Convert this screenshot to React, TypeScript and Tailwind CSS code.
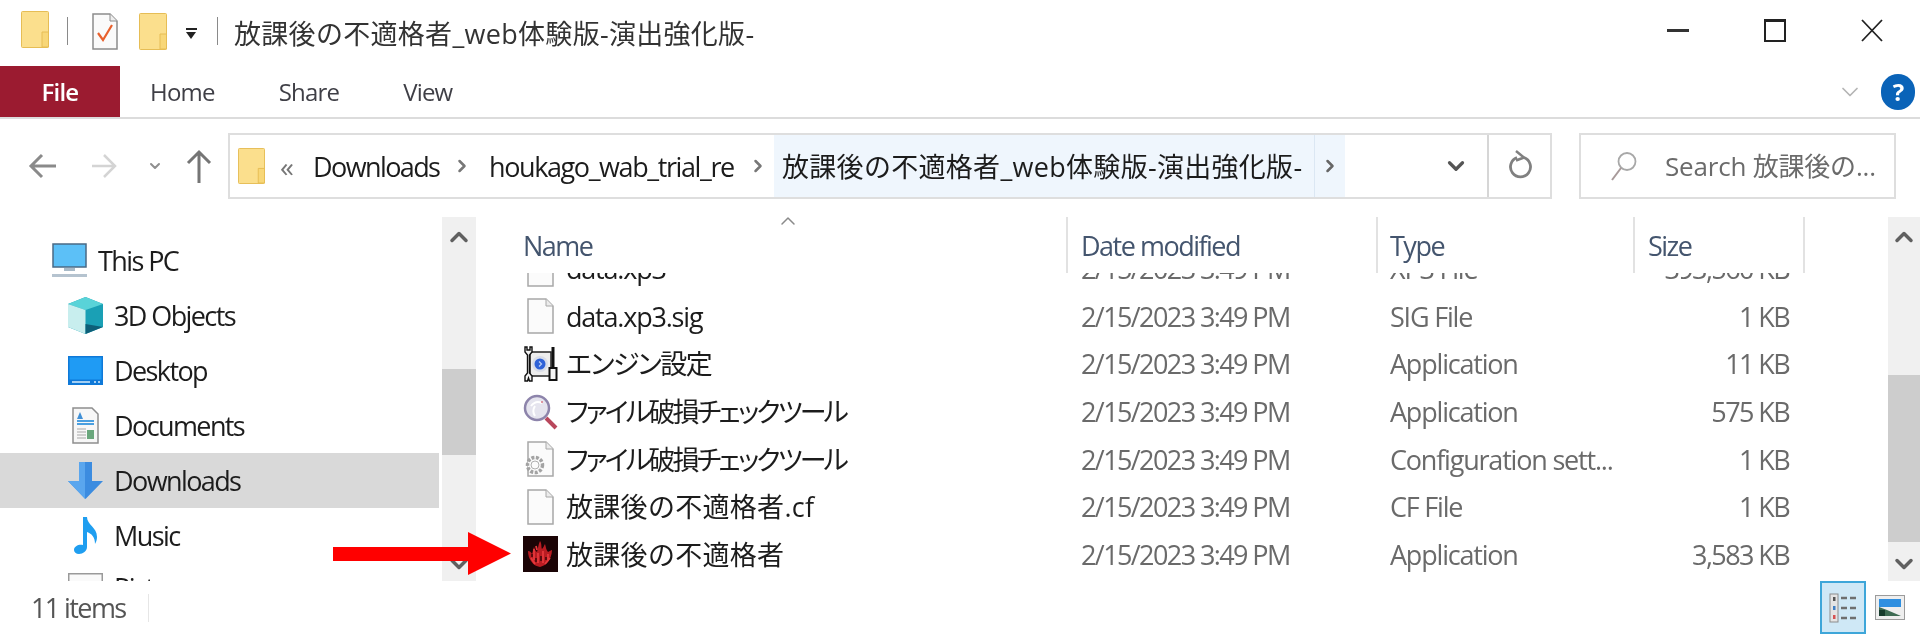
import type { ReactNode } from 'react';
import { ChevronDown, ChevronRight, ChevronUp } from 'lucide-react';

const font = "font-['Open_Sans','Noto_Sans_CJK_JP',sans-serif]";

function FolderIcon({ className }: { className: string }) {
  return (
    <svg viewBox="0 0 28 37" preserveAspectRatio="none" className={className}>
      <rect x="0.5" y="0.5" width="27" height="36" rx="1" fill="#fbdf8d" stroke="#e6bd55" />
      <path d="M21 36V21h6.500v15z" fill="#f8d778" stroke="#e6bd55" />
    </svg>
  );
}

function CheckFileIcon() {
  return (
    <svg viewBox="0 0 26 37" preserveAspectRatio="none" className="h-[37px] w-[26px]">
      <path d="M1 1h17l7 7v28H1z" fill="#fafafa" stroke="#8c8c8c" strokeWidth="1.5" />
      <path d="M18 1v7h7" fill="#eee" stroke="#8c8c8c" />
      <path d="M6 20l5 7 9-15" fill="none" stroke="#e8602c" strokeWidth="2.2" />
    </svg>
  );
}

function PlainFile({ children }: { children?: ReactNode }) {
  return (
    <svg viewBox="0 0 35 36" className="h-[36px] w-[35px] shrink-0">
      <path d="M5 1h18l7 7v27H5z" fill="#fbfbfb" stroke="#a8a8a8" strokeWidth="1.5" />
      <path d="M23 1v7h7" fill="#ececec" stroke="#a8a8a8" />
      {children}
    </svg>
  );
}

function EngineIcon() {
  return (
    <svg viewBox="0 0 35 36" className="h-[36px] w-[35px] shrink-0">
      <rect x="7" y="6" width="21" height="24" fill="#eeeeee" stroke="#222" strokeWidth="1.5" />
      <circle cx="17" cy="18" r="8" fill="#d9dde8" />
      <circle cx="17" cy="18" r="5.500" fill="#2f62d8" />
      <path d="M16 15.500l2.500 2.500-2.500 2.500" fill="none" stroke="#b9cdf5" strokeWidth="1.3" />
      <path d="M2 1v5l2.500 3v18L2 30v5h2.500l1-3 1 3H9v-5l-2.500-3V9L9 6V1H7v3H4V1z" fill="#f4f4f4" stroke="#111" strokeWidth="1.4" />
      <path d="M30 1v20" stroke="#111" strokeWidth="3" />
      <rect x="26.500" y="22" width="7" height="12" fill="#f4f4f4" stroke="#111" strokeWidth="2" />
    </svg>
  );
}

function MagnifierIcon() {
  return (
    <svg viewBox="0 0 35 36" className="h-[36px] w-[35px] shrink-0">
      <path d="M23 24l10 10" stroke="#b9475c" strokeWidth="4" />
      <circle cx="14" cy="14" r="12" fill="#e5e4ee" stroke="#8d84ab" strokeWidth="2.500" />
      <path d="M8 12c3-4 7-5 11-3M12 22c-2-3-2-7 0-10" fill="none" stroke="#ffffff" strokeWidth="2" />
      <circle cx="19" cy="8" r="1" fill="#d77a86" />
    </svg>
  );
}

function GearFileIcon() {
  return (
    <PlainFile>
      <circle cx="12" cy="24" r="7.500" fill="#fbfbfb" stroke="#a3a3a3" strokeWidth="3.500" strokeDasharray="3 1.500" />
      <circle cx="12" cy="24" r="4" fill="#fbfbfb" stroke="#b0b0b0" />
    </PlainFile>
  );
}

function GameIcon() {
  return (
    <svg viewBox="0 0 35 36" className="h-[36px] w-[35px] shrink-0">
      <rect width="35" height="36" fill="#1b0406" />
      <path d="M17 5c2 3 1 6 2 8 2-2 2-4 3-5 1 3 1 6 3 8 2-1 3-2 4-2 0 5-2 9-4 12-2 2-4 4-8 5-5-1-7-3-9-6-2-3-3-6-3-10 2 0 3 1 4 3 1-3 1-5 2-7 1 2 1 4 3 5 1-3 1-7 3-11z" fill="#b91c22" />
      <path d="M11 13v11M15 17v10M20 15v12M25 18v7M8 22l4 6M27 22l-5 6M13 10l1 4" stroke="#e5383b" strokeWidth="1.800" fill="none" />
      <path d="M13 22v4M18 20v5M23 21v3M9 18v3" stroke="#3d0508" strokeWidth="1.500" fill="none" />
    </svg>
  );
}

function PcIcon() {
  return (
    <svg viewBox="0 0 35 35" className="h-[35px] w-[35px]">
      <rect x="1" y="1" width="33" height="23" fill="#5cc0f7" stroke="#4a6a85" strokeWidth="1.500" />
      <rect x="12" y="25" width="11" height="3" fill="#a8bac8" />
      <rect x="0" y="31" width="35" height="3" fill="#b5c3cf" />
    </svg>
  );
}

function CubeIcon() {
  return (
    <svg viewBox="0 0 35 37" className="h-[37px] w-[35px]">
      <path d="M17.500 0L35 7v23l-17.500 7L0 30V7z" fill="#1aa0b5" />
      <path d="M17.500 0L35 7l-17.500 6L0 7z" fill="#59d3d8" />
      <path d="M0 7l17.500 6v24L0 30z" fill="#c8eeee" />
      <path d="M17.500 27L35 30l-17.500 7z" fill="#0d5f78" />
    </svg>
  );
}

function DesktopIcon() {
  return (
    <svg viewBox="0 0 35 29" className="h-[29px] w-[35px]">
      <rect width="35" height="29" fill="#0f79d8" />
      <rect x="1.500" y="1.500" width="32" height="22" fill="#1f9bf4" />
      <path d="M4 26h18M26 26h2M30 26h2" stroke="#d5ecfb" strokeWidth="1.500" />
    </svg>
  );
}

function DocumentsIcon() {
  return (
    <svg viewBox="0 0 27 37" className="h-[37px] w-[27px]">
      <path d="M1 1h19l6 6v29H1z" fill="#f7f7f7" stroke="#8e8e8e" strokeWidth="1.500" />
      <path d="M5 14h17M5 17h17" stroke="#4a9fe0" strokeWidth="2" />
      <path d="M8 5l3 7H5z" fill="#3f8fd6" />
      <path d="M5 22h9M5 25h9M5 28h9M5 31h9" stroke="#a7a7a7" />
      <rect x="15" y="23" width="7" height="9" fill="#6aa77d" />
    </svg>
  );
}

function DownloadsIcon() {
  return (
    <svg viewBox="0 0 35 37" className="h-[37px] w-[35px]">
      <path d="M11 0h13v19h11L17.500 37 0 19h11z" fill="#3c8ce0" />
      <path d="M11 0h6v37L0 19h11z" fill="#5aa6ee" />
    </svg>
  );
}

function MusicIcon() {
  return (
    <svg viewBox="0 0 35 37" className="h-[37px] w-[35px]">
      <path d="M15 0h4c0 8 10 10 10 20 0 3-1 5-2 7 0-7-3-10-8-12v15c0 4-4 7-8 7-3 0-5-2-5-4 0-4 5-6 9-5z" fill="#1f9ef0" />
    </svg>
  );
}

function PicturesIcon() {
  return (
    <svg viewBox="0 0 35 30" className="h-[30px] w-[35px]">
      <rect x="0.750" y="0.750" width="33.500" height="28" fill="#fafafa" stroke="#9a9a9a" strokeWidth="1.500" />
    </svg>
  );
}

function DetailsViewIcon() {
  return (
    <svg viewBox="0 0 30 30" className="h-[30px] w-[30px]">
      <rect x="2" y="1" width="8" height="28" fill="#e4e4e4" stroke="#8c8c8c" />
      <rect x="5" y="4" width="2.500" height="4" fill="#555" />
      <rect x="5" y="13" width="2.500" height="4" fill="#3f7fc4" />
      <rect x="5" y="22" width="2.500" height="4" fill="#d65252" />
      <path d="M13 5h6M22 5h6M13 15h6M22 15h6M13 25h6M22 25h6" stroke="#6f6f6f" strokeWidth="2.500" />
    </svg>
  );
}

function PreviewViewIcon() {
  return (
    <svg viewBox="0 0 30 25" className="h-[25px] w-[30px]">
      <rect x="0.500" y="0.500" width="29" height="24" fill="#eeeeee" stroke="#9b9b9b" />
      <rect x="4" y="4" width="22" height="8" fill="#2f8fe0" />
      <path d="M4 21V12l8 3 14 6z" fill="#3e6b53" />
      <rect x="4" y="15" width="6" height="6" fill="#163b2c" />
    </svg>
  );
}

const navItems = [
  { label: 'This PC', icon: <PcIcon />, indent: 'pl-[52px]', extra: '' },
  { label: '3D Objects', icon: <CubeIcon />, indent: 'pl-[68px]', extra: '' },
  { label: 'Desktop', icon: <DesktopIcon />, indent: 'pl-[68px]', extra: '' },
  { label: 'Documents', icon: <span className="flex w-[35px] justify-center"><DocumentsIcon /></span>, indent: 'pl-[68px]', extra: '' },
  { label: 'Downloads', icon: <DownloadsIcon />, indent: 'pl-[68px]', extra: 'bg-[#d9d9d9]' },
  { label: 'Music', icon: <MusicIcon />, indent: 'pl-[68px]', extra: '' },
  { label: 'Pictures', icon: <PicturesIcon />, indent: 'pl-[68px]', extra: '-mt-[3px]' },
];

const DATE = '2/15/2023 3:49 PM';
const rows = [
  { name: 'data.xp3', type: 'XP3 File', size: '393,560 KB', icon: <PlainFile />, text: 'tracking-[-1.200px]' },
  { name: 'data.xp3.sig', type: 'SIG File', size: '1 KB', icon: <PlainFile />, text: 'tracking-[-1.200px]' },
  { name: 'エンジン設定', type: 'Application', size: '11 KB', icon: <EngineIcon />, text: "tracking-[-1.500px] [font-feature-settings:'palt']" },
  { name: 'ファイル破損チェックツール', type: 'Application', size: '575 KB', icon: <MagnifierIcon />, text: "tracking-[-2.800px] [font-feature-settings:'palt']" },
  { name: 'ファイル破損チェックツール', type: 'Configuration sett...', size: '1 KB', icon: <GearFileIcon />, text: "tracking-[-2.800px] [font-feature-settings:'palt']" },
  { name: '放課後の不適格者.cf', type: 'CF File', size: '1 KB', icon: <PlainFile />, text: 'tracking-[0.300px]' },
  { name: '放課後の不適格者', type: 'Application', size: '3,583 KB', icon: <GameIcon />, text: 'tracking-[0.300px]' },
];

const columns = 'grid grid-cols-[586px_310px_257px_172px]';

export default function App() {
  return (
    <div className={`relative flex h-[634px] w-[1920px] flex-col overflow-hidden bg-white text-[27px] leading-none text-[#1c1c1c] blur-[0.7px] ${font}`}>
      {/* Title bar */}
      <div className="flex h-[66px] shrink-0 items-center pl-[21px]">
        <FolderIcon className="mb-[7px] h-[37px] w-[28px]" />
        <div className="ml-[18px] mb-[4px] h-[28px] w-px bg-[#8a8a8a]" />
        <div className="ml-[24px] mb-[4px]"><CheckFileIcon /></div>
        <FolderIcon className="ml-[21px] mb-[3px] h-[37px] w-[28px]" />
        <div className="ml-[18px] flex w-[12px] flex-col items-center gap-[2px]">
          <div className="h-[2px] w-[11px] bg-[#222]" />
          <div className="h-0 w-0 border-x-[5px] border-t-[7px] border-x-transparent border-t-[#222]" />
        </div>
        <div className="ml-[20px] mb-[4px] h-[28px] w-px bg-[#8a8a8a]" />
        <span className="ml-[16px] tracking-[0.300px] text-[#333]">放課後の不適格者_web体験版-演出強化版-</span>
        <div className="mb-[6px] ml-auto flex items-center gap-[75px] pr-[37px]">
          <div className="h-[3px] w-[22px] bg-[#333]" />
          <div className="h-[23px] w-[22px] border-2 border-t-[3px] border-[#222]" />
          <svg viewBox="0 0 22 23" className="h-[23px] w-[22px]">
            <path d="M1 1l20 21M21 1L1 22" stroke="#222" strokeWidth="1.800" />
          </svg>
        </div>
      </div>

      {/* Ribbon tabs */}
      <div className="flex h-[53px] shrink-0 items-center border-b-2 border-[#dcdcdc] text-[24px] tracking-[-0.800px] text-[#3f3f46]">
        <div className="flex h-full w-[120px] items-center justify-center bg-[#9b1b30] font-semibold text-white">File</div>
        <span className="ml-[30px]">Home</span>
        <span className="ml-[64px]">Share</span>
        <span className="ml-[64px]">View</span>
        <ChevronDown className="ml-auto h-[28px] w-[28px] text-[#b5b5b5]" strokeWidth={1.500} />
        <div className="ml-[17px] mr-[5px] flex h-[36px] w-[34px] items-center justify-center rounded-full bg-[#0a63b8] font-bold text-white">?</div>
      </div>

      {/* Address row */}
      <div className="mt-[14px] flex h-[66px] shrink-0 items-center">
        <div className="flex w-[228px] items-center pl-[28px]">
          <svg viewBox="0 0 28 26" className="h-[26px] w-[28px]">
            <path d="M28 13H3M14 2L3 13l11 11" fill="none" stroke="#8a8a8a" strokeWidth="3" />
          </svg>
          <svg viewBox="0 0 26 26" className="ml-[36px] h-[26px] w-[26px]">
            <path d="M0 13h23M12 2l11 11-11 11" fill="none" stroke="#d4d4d4" strokeWidth="2.500" />
          </svg>
          <ChevronDown className="ml-[29px] h-[16px] w-[16px] text-[#8f8f8f]" strokeWidth={3} />
          <svg viewBox="0 0 26 34" className="ml-[23px] h-[34px] w-[26px]">
            <path d="M13 34V3M2 14L13 3l11 11" fill="none" stroke="#757575" strokeWidth="3" />
          </svg>
        </div>
        <div className="flex h-full w-[1324px] items-center border-2 border-[#dedede]">
          <FolderIcon className="ml-[8px] h-[36px] w-[27px] shrink-0" />
          <span className="ml-[15px] w-[19px] shrink-0 text-[28px] text-[#777]">«</span>
          <span className="ml-[14px] w-[125px] shrink-0 tracking-[-1.600px]">Downloads</span>
          <ChevronRight className="ml-[14px] h-[20px] w-[20px] shrink-0 text-[#777]" strokeWidth={3} />
          <span className="ml-[17px] w-[245px] shrink-0 whitespace-nowrap tracking-[-1.400px]">houkago_wab_trial_re</span>
          <ChevronRight className="ml-[14px] h-[20px] w-[20px] shrink-0 text-[#777]" strokeWidth={3} />
          <div className="ml-[6px] flex h-full w-[571px] shrink-0 items-center bg-[#eff6fd]">
            <span className="ml-[8px] w-[532px] shrink-0 whitespace-nowrap tracking-[0.300px]">放課後の不適格者_web体験版-演出強化版-</span>
            <div className="flex h-full flex-1 items-center justify-center border-l border-[#dbe7f3]">
              <ChevronRight className="h-[20px] w-[20px] text-[#666]" strokeWidth={3} />
            </div>
          </div>
          <ChevronDown className="ml-[98px] h-[26px] w-[26px] shrink-0 text-[#555]" strokeWidth={3} />
          <div className="ml-[18px] flex h-full flex-1 items-center justify-center border-l-2 border-[#d6d6d6]">
            <svg viewBox="0 0 24 32" className="h-[32px] w-[24px]">
              <path d="M9 7.500a10 10 0 1 0 7 0" fill="none" stroke="#808080" strokeWidth="2.800" />
              <path d="M8 1l8 6.500-8 3" fill="none" stroke="#808080" strokeWidth="2.500" />
            </svg>
          </div>
        </div>
        <div className="ml-[27px] flex h-full w-[317px] items-center border-2 border-[#dedede] pl-[30px] text-[#6b6b6b]">
          <svg viewBox="0 0 26 30" className="h-[30px] w-[26px] shrink-0">
            <circle cx="16" cy="10.500" r="8.500" fill="none" stroke="#a8a8a8" strokeWidth="1.800" />
            <path d="M10 17L1 29" stroke="#a89a9a" strokeWidth="2" />
          </svg>
          <span className="ml-[28px] whitespace-nowrap text-[26px] tracking-[-0.200px]">Search 放課後の...</span>
        </div>
      </div>

      {/* Body */}
      <div className="mt-[18px] flex h-[364px] shrink-0">
        <div className="w-[439px] shrink-0 overflow-hidden pt-[16px]">
          {navItems.map((item) => (
            <div key={item.label} className={`flex h-[55px] items-center gap-[11px] tracking-[-1.600px] ${item.indent} ${item.extra}`}>
              {item.icon}
              <span>{item.label}</span>
            </div>
          ))}
        </div>
        <div className="ml-[3px] flex w-[34px] shrink-0 flex-col items-center bg-[#f0f0f0]">
          <ChevronUp className="mt-[6px] h-[28px] w-[28px] text-[#606060]" strokeWidth={3} />
          <div className="mt-[118px] h-[86px] w-full bg-[#cdcdcd]" />
          <ChevronDown className="mt-auto mb-[3px] h-[28px] w-[28px] text-[#606060]" strokeWidth={3} />
        </div>
        <div className="ml-[4px] min-w-0 flex-1">
          <div className={`${columns} h-[56px] tracking-[-1.500px] text-[#44556e]`}>
            <div className="relative flex items-center pl-[43px]">
              Name
              <ChevronUp className="absolute left-[295px] top-[-8px] h-[24px] w-[26px] text-[#8a8a8a]" strokeWidth={1.500} />
            </div>
            <div className="flex items-center border-l-2 border-[#e2e2e2] pl-[13px]">Date modified</div>
            <div className="flex items-center border-l-2 border-[#e2e2e2] pl-[12px]">Type</div>
            <div className="flex items-center border-x-2 border-[#e2e2e2] pl-[13px]">Size</div>
          </div>
          <div className="h-[308px] overflow-hidden">
            <div className="-mt-[28px]">
              {rows.map((row) => (
                <div key={row.name + row.type} className={`${columns} h-[47.600px] items-center text-[#6a6a6a]`}>
                  <div className="flex items-center gap-[8px] pl-[43px] text-[#1c1c1c]">
                    {row.icon}
                    <span className={`whitespace-nowrap ${row.text}`}>{row.name}</span>
                  </div>
                  <div className="whitespace-nowrap pl-[15px] tracking-[-1.600px]">{DATE}</div>
                  <div className="whitespace-nowrap pl-[14px] tracking-[-1.200px]">{row.type}</div>
                  <div className="pr-[16px] text-right tracking-[-1.600px]">{row.size}</div>
                </div>
              ))}
            </div>
          </div>
        </div>
        <div className="flex w-[32px] shrink-0 flex-col items-center bg-[#f0f0f0]">
          <ChevronUp className="mt-[6px] h-[28px] w-[28px] text-[#606060]" strokeWidth={3} />
          <div className="mt-[124px] h-[167px] w-full bg-[#cdcdcd]" />
          <ChevronDown className="mt-auto mb-[3px] h-[28px] w-[28px] text-[#606060]" strokeWidth={3} />
        </div>
      </div>

      {/* Status bar */}
      <div className="flex min-h-0 flex-1 items-center pl-[31px] tracking-[-1.600px] text-[#555]">
        <span>11 items</span>
        <div className="ml-[22px] h-[28px] w-px bg-[#e6e6e6]" />
        <div className="ml-auto flex h-full w-[46px] items-center justify-center border-2 border-[#3ea6d9] bg-[#cfe8f6]">
          <DetailsViewIcon />
        </div>
        <div className="ml-[9px] mr-[15px]"><PreviewViewIcon /></div>
      </div>

      {/* Red arrow annotation */}
      <svg viewBox="0 0 178 43" className="absolute left-[333px] top-[532px] h-[43px] w-[178px]">
        <path d="M0 15h135V0l43 21.500-43 21.500V29H0z" fill="#ff0000" />
      </svg>
    </div>
  );
}
